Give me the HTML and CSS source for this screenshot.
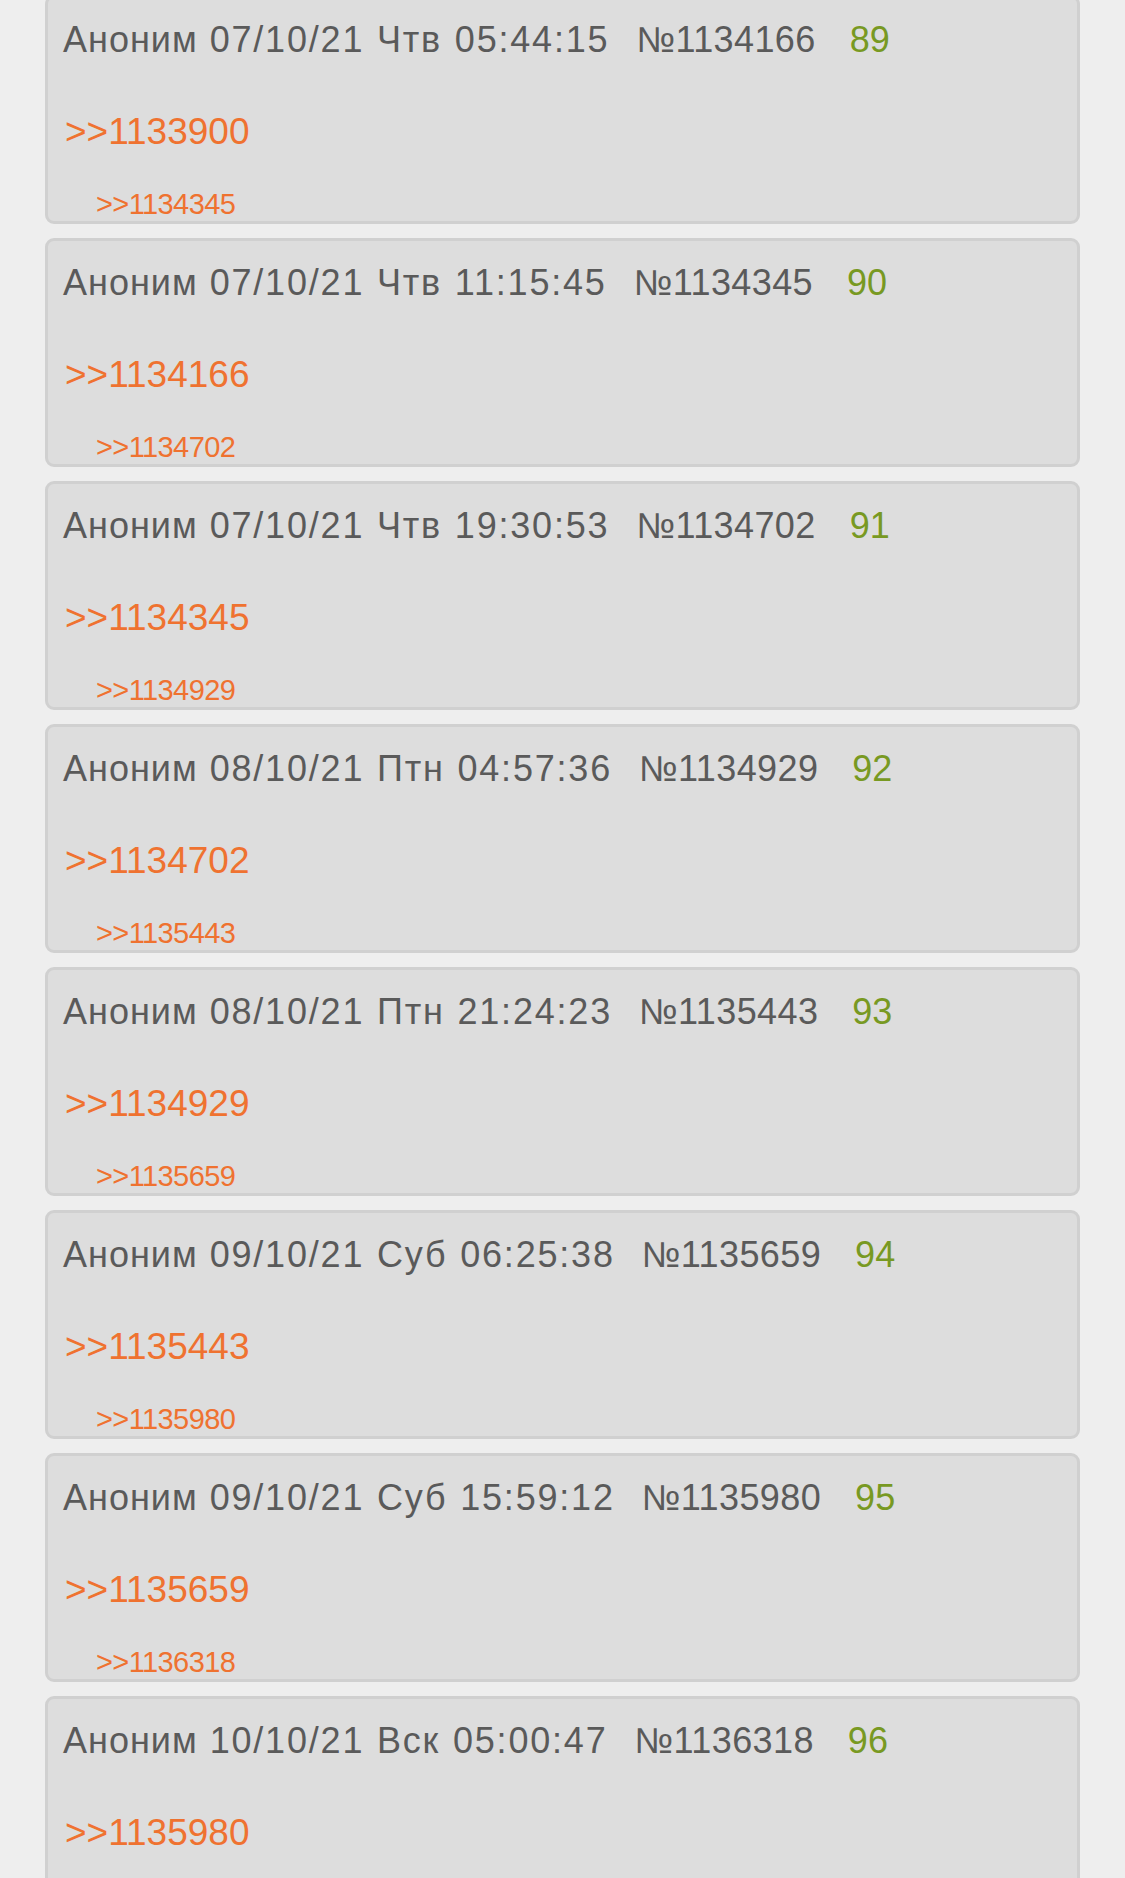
FILE: index.html
```html
<!DOCTYPE html>
<html lang="ru">
<head>
    <meta charset="UTF-8">
    <meta name="viewport" content="width=device-width, initial-scale=1.0">
    <title>Тред</title>
    <link rel="stylesheet" href="styles.css">
</head>
<body>
<div class="thread">
    <div class="post">
        <div class="post-head"><span class="name">Аноним</span> <span class="date">07/10/21 Чтв 05:44:15</span> <span class="num">№1134166</span> <span class="count">89</span></div>
        <a class="post-link" href="#">&gt;&gt;1133900</a>
        <div class="replies"><a href="#">&gt;&gt;1134345</a></div>
    </div>
    <div class="post">
        <div class="post-head"><span class="name">Аноним</span> <span class="date">07/10/21 Чтв 11:15:45</span> <span class="num">№1134345</span> <span class="count">90</span></div>
        <a class="post-link" href="#">&gt;&gt;1134166</a>
        <div class="replies"><a href="#">&gt;&gt;1134702</a></div>
    </div>
    <div class="post">
        <div class="post-head"><span class="name">Аноним</span> <span class="date">07/10/21 Чтв 19:30:53</span> <span class="num">№1134702</span> <span class="count">91</span></div>
        <a class="post-link" href="#">&gt;&gt;1134345</a>
        <div class="replies"><a href="#">&gt;&gt;1134929</a></div>
    </div>
    <div class="post">
        <div class="post-head"><span class="name">Аноним</span> <span class="date">08/10/21 Птн 04:57:36</span> <span class="num">№1134929</span> <span class="count">92</span></div>
        <a class="post-link" href="#">&gt;&gt;1134702</a>
        <div class="replies"><a href="#">&gt;&gt;1135443</a></div>
    </div>
    <div class="post">
        <div class="post-head"><span class="name">Аноним</span> <span class="date">08/10/21 Птн 21:24:23</span> <span class="num">№1135443</span> <span class="count">93</span></div>
        <a class="post-link" href="#">&gt;&gt;1134929</a>
        <div class="replies"><a href="#">&gt;&gt;1135659</a></div>
    </div>
    <div class="post">
        <div class="post-head"><span class="name">Аноним</span> <span class="date">09/10/21 Суб 06:25:38</span> <span class="num">№1135659</span> <span class="count">94</span></div>
        <a class="post-link" href="#">&gt;&gt;1135443</a>
        <div class="replies"><a href="#">&gt;&gt;1135980</a></div>
    </div>
    <div class="post">
        <div class="post-head"><span class="name">Аноним</span> <span class="date">09/10/21 Суб 15:59:12</span> <span class="num">№1135980</span> <span class="count">95</span></div>
        <a class="post-link" href="#">&gt;&gt;1135659</a>
        <div class="replies"><a href="#">&gt;&gt;1136318</a></div>
    </div>
    <div class="post">
        <div class="post-head"><span class="name">Аноним</span> <span class="date">10/10/21 Вск 05:00:47</span> <span class="num">№1136318</span> <span class="count">96</span></div>
        <a class="post-link" href="#">&gt;&gt;1135980</a>
    </div>
</div>
</body>
</html>
```

FILE: styles.css
```css
body {
    margin: 0;
    padding: 0;
    background-color: #eeeeee;
    font-family: "Liberation Sans", Arial, sans-serif;
}
.thread {
    margin-top: -5px;
    padding: 0 45px;
}
.post {
    background-color: #dddddd;
    border: 3px solid #d0d0d0;
    border-radius: 9px;
    padding: 20px 15px 0 15px;
    margin-bottom: 14px;
    height: 203px;
    overflow: hidden;
}
.post-head {
    font-size: 36px;
    line-height: 44px;
    color: #5a5a5a;
    white-space: nowrap;
    letter-spacing: 1px;
    word-spacing: 1px;
}
.date {
    letter-spacing: 1.8px;
}
.num {
    margin-left: 15px;
    letter-spacing: 0.4px;
}
.count {
    margin-left: 22px;
    color: #789922;
    letter-spacing: 0;
}
a {
    color: #ef7230;
    text-decoration: none;
}
.post-link {
    display: block;
    margin-top: 48px;
    margin-left: 2px;
    font-size: 37px;
    line-height: 44px;
}
.replies {
    margin-top: 33px;
    padding-left: 33px;
    font-size: 29px;
    line-height: 34px;
    letter-spacing: -0.6px;
}
```
